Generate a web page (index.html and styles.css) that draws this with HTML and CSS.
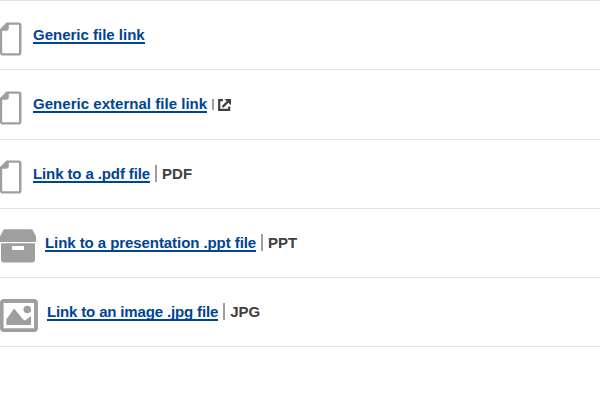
FILE: index.html
```html
<!DOCTYPE html>
<html lang="en">
<head>
<meta charset="utf-8">
<title>File links</title>
<link rel="stylesheet" href="styles.css">
</head>
<body>
<svg class="defs" aria-hidden="true">
  <symbol id="file" viewBox="0 0 22 34">
    <path fill-rule="evenodd" d="M6.5 0.4H18.8Q21.5 0.4 21.5 3.2V30.7Q21.5 33.5 18.8 33.5H2.8Q0 33.5 0 30.7V7ZM8.8 2.7V6Q8.8 8.8 6 8.8H2.2V31.3H19V2.7Z"/>
  </symbol>
</svg>
<ul class="list">
  <li class="item">
    <svg class="icon icon-file"><use href="#file"/></svg>
    <a class="link" href="#">Generic file link</a>
  </li>
  <li class="item tall">
    <svg class="icon icon-file"><use href="#file"/></svg>
    <a class="link link-external" href="#">Generic external file link</a>
    <span class="external"><svg viewBox="0 0 13 12"><path d="M5 1.2H1.2V10.8H11.2V7.6" fill="none" stroke="#404040" stroke-width="2.2"/><path d="M4.5 8L10.5 2" stroke="#404040" stroke-width="2.4"/><path d="M6.5 0H13V6.3Z" fill="#404040"/></svg></span>
  </li>
  <li class="item">
    <svg class="icon icon-file raised"><use href="#file"/></svg>
    <a class="link link-pdf" href="#">Link to a .pdf file</a>
    <span class="type">PDF</span>
  </li>
  <li class="item">
    <svg class="icon icon-box raised" viewBox="0 0 36 34"><path d="M5 0.3H31Q32.2 .3 32.8 1.3L36 7.5V13H0V7.5L3.2 1.3Q3.8 .3 5 .3Z"/><path fill-rule="evenodd" d="M1 14.2H35V31Q35 33.4 32.6 33.4H3.4Q1 33.4 1 31ZM12 17V21H24V17Z"/></svg>
    <a class="link link-ppt" href="#">Link to a presentation .ppt file</a>
    <span class="type">PPT</span>
  </li>
  <li class="item">
    <svg class="icon icon-image" viewBox="0 0 38 34"><path fill-rule="evenodd" d="M4 0H34Q38 0 38 4V29Q38 33 34 33H4Q0 33 0 29V4Q0 0 4 0ZM3.6 4V29.3H34V4Z"/><path d="M6.3 26V20.5L14.1 9.5L22.7 20L25 21.5L31 17V26Z"/><circle cx="27.3" cy="10.5" r="3.8"/></svg>
    <a class="link link-jpg" href="#">Link to an image .jpg file</a>
    <span class="type">JPG</span>
  </li>
</ul>
</body>
</html>
```
FILE: styles.css
```css
body {
  margin: 0;
  background: #fff;
  font: bold 15px/17px "Liberation Sans", Arial, sans-serif;
  color: #404040;
}
.defs {
  position: absolute;
  width: 0;
  height: 0;
}
.list {
  list-style: none;
  margin: 0;
  padding: 0;
  border-top: 1px solid #e1e1e1;
}
.item {
  box-sizing: border-box;
  height: 69px;
  display: flex;
  align-items: flex-start;
  border-bottom: 1px solid #e1e1e1;
}
.item.tall {
  height: 70px;
}
.icon {
  flex: none;
  height: 34px;
  margin-top: 21px;
  fill: #9f9f9f;
}
.icon.raised {
  margin-top: 20px;
}
.icon-file {
  width: 22px;
  margin-right: 11px;
}
.icon-box {
  width: 36px;
  margin-right: 9px;
}
.icon-image {
  width: 38px;
  margin-right: 9px;
}
.link {
  box-sizing: border-box;
  height: 18px;
  margin-top: 25px;
  color: #004494;
  text-decoration: none;
  white-space: nowrap;
  border-bottom: 2px solid #004494;
}
.link-external {
  letter-spacing: 0.03px;
}
.link-pdf {
  letter-spacing: -0.11px;
}
.link-ppt {
  letter-spacing: -0.07px;
}
.link-jpg {
  letter-spacing: -0.15px;
}
.type {
  margin: 25px 0 0 5px;
  padding-left: 5px;
  border-left: 2px solid #9f9f9f;
}
.external {
  margin: 29px 0 0 5px;
  padding-left: 4px;
  border-left: 2px solid #9f9f9f;
  height: 11px;
}
.external svg {
  display: block;
  width: 13px;
  height: 12px;
}
```
